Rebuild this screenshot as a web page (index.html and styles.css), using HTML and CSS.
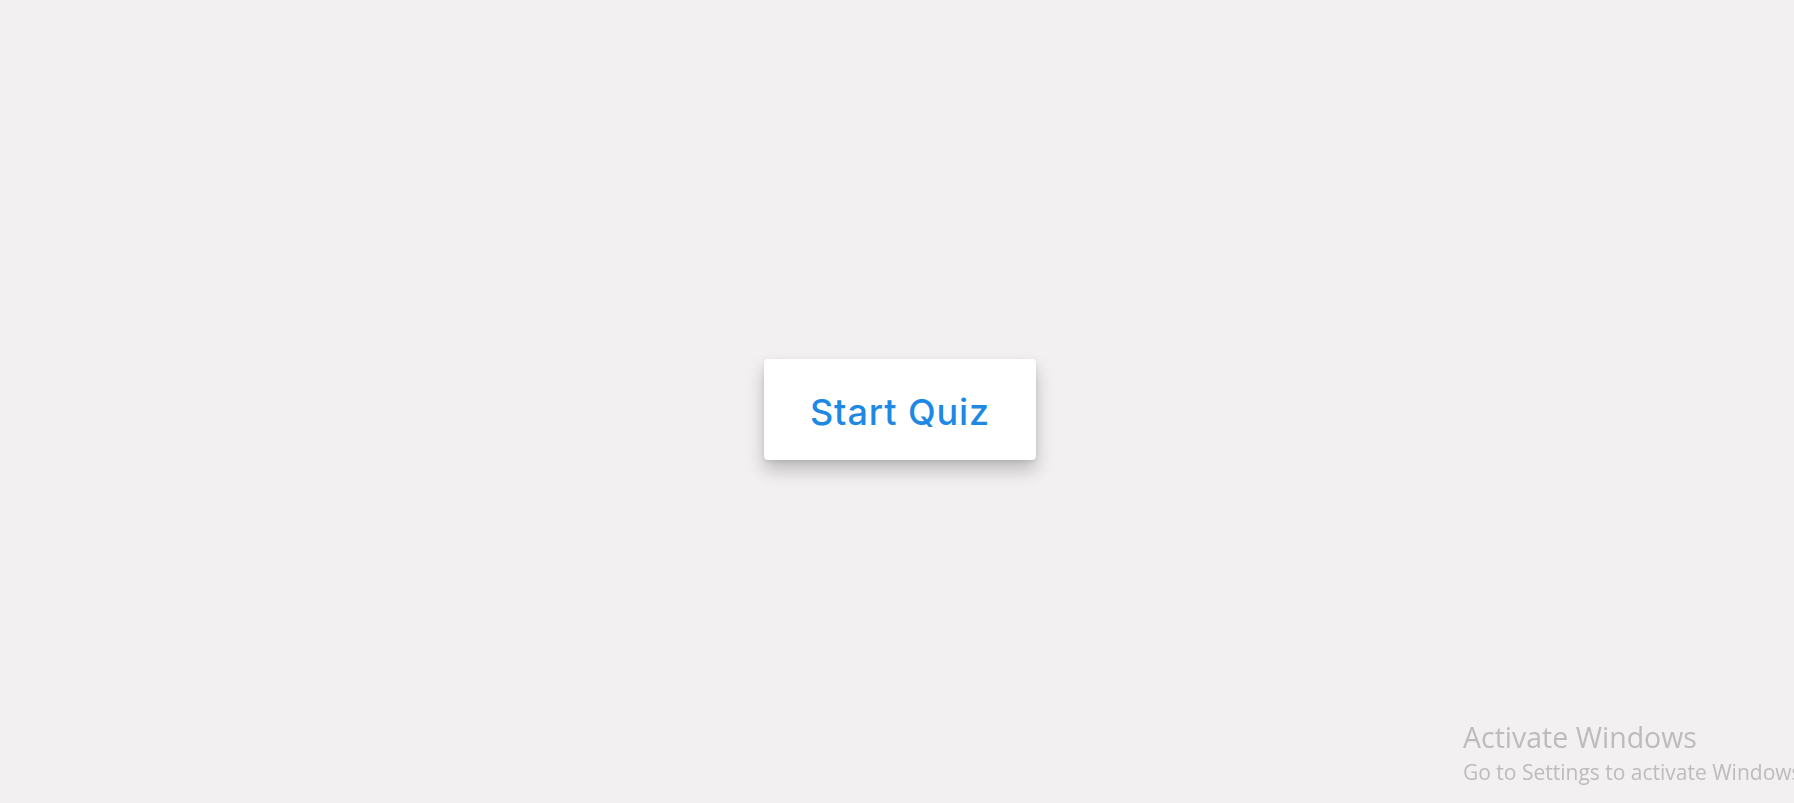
FILE: index.html
```html
<!DOCTYPE html>
<html lang="en">
<head>
<meta charset="utf-8">
<title>Quiz</title>
<link rel="stylesheet" href="styles.css">
</head>
<body>
<main class="stage">
  <button class="start-btn" type="button">Start Quiz</button>
</main>
<div class="watermark">
  <div class="wm-title">Activate Windows</div>
  <div class="wm-sub">Go to Settings to activate Windows.</div>
</div>
</body>
</html>
```
FILE: styles.css
```css
html, body { background: #f2f0f1; }
body {
  margin: 8px 0 0 0;
  overflow: hidden;
}
.stage {
  height: 100vh;
  display: flex;
  align-items: center;
  justify-content: center;
  padding-left: 6px;
  box-sizing: border-box;
}
.start-btn {
  width: 272px;
  height: 101px;
  padding: 5px 0 0 0;
  border: none;
  border-radius: 4px;
  background: #ffffff;
  color: #1e88e5;
  font-family: "Inter", "Noto Sans", sans-serif;
  font-size: 36px;
  font-weight: 500;
  letter-spacing: 0.9px;
  box-shadow: 0 10px 18px rgba(0,0,0,0.22), 0 2px 4px rgba(0,0,0,0.08);
  cursor: pointer;
}
.watermark {
  position: fixed;
  left: 1463px;
  top: 718px;
  color: #bdbbbc;
  font-family: "Open Sans", "Noto Sans", sans-serif;
  white-space: nowrap;
}
.wm-title { font-size: 28.5px; line-height: 38px; }
.wm-sub { font-size: 21px; line-height: 32px; }
```
